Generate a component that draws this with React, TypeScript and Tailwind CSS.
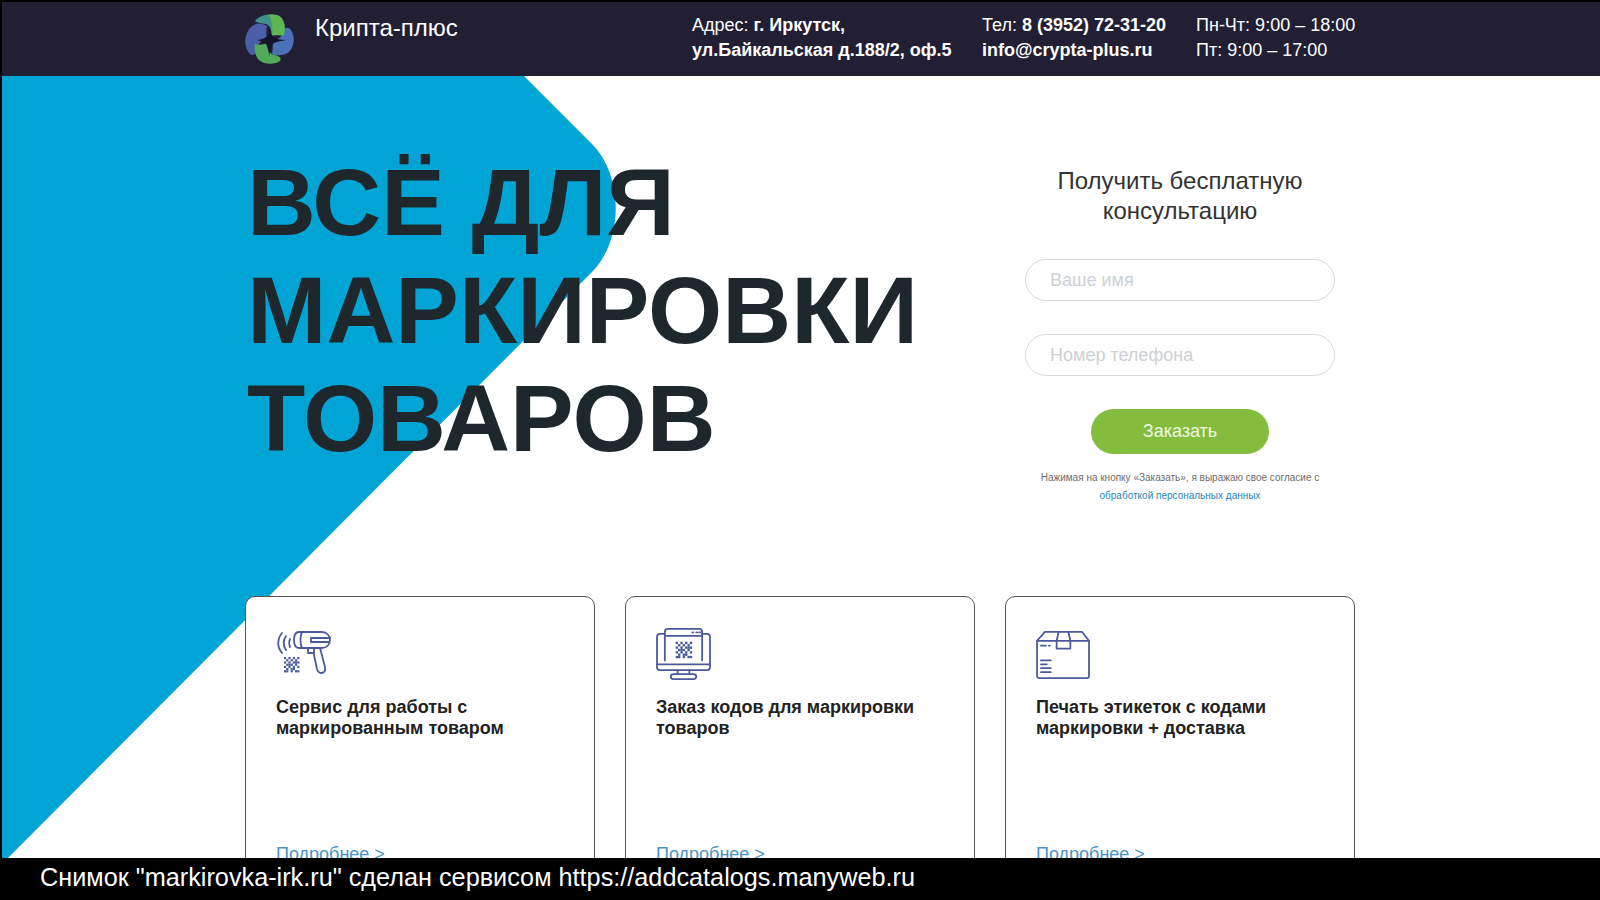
const cards = [
  { title: ['Сервис для работы с', 'маркированным товаром'], icon: 'scanner' },
  { title: ['Заказ кодов для маркировки', 'товаров'], icon: 'monitor' },
  { title: ['Печать этикеток с кодами', 'маркировки + доставка'], icon: 'box' },
] as const;

function Logo() {
  return (
    <svg width="54" height="54" viewBox="0 0 54 54" className="shrink-0">
      {/* left petal */}
      <path d="M9 15C14 10 20 11 25 14C24 18 24 22 25 26C20 27 17 30 16 36C15 41 11 45 8 42C1 35 2 22 9 15Z" fill="#4a5fa6" />
      {/* right petal */}
      <path d="M30 28C36 28 40 25 41 20C42 16 46 14 49 18C53 24 53 34 47 40C42 44 35 44 30 42C31 37 31 33 30 28Z" fill="#4a70b8" />
      {/* top petal */}
      <path d="M13 9C18 2 33 0 39 5C43 9 44 17 42 24C37 23 33 23 29 24C30 18 28 14 24 12C20 11 15 11 13 9Z" fill="#3f8f8a" />
      <path d="M27 3C33 2 38 3 40 7C43 11 43 18 42 23C38 23 34 23 30 23C31 17 30 9 27 3Z" fill="#5fb64f" />
      {/* bottom petal */}
      <path d="M13 32C17 33 21 33 25 31C25 37 27 42 33 43C37 44 40 46 38 49C33 53 21 53 16 47C13 43 12 37 13 32Z" fill="#52a95a" />
      {/* centre star */}
      <path d="M27 14C28 20 27 23 24 25C22 27 18 28 15 28C19 29 22 30 24 32C26 35 27 39 27 44C28 39 29 35 31 32C33 30 38 29 44 28C38 28 34 27 31 25C29 22 28 18 27 14Z" fill="#15132a" />
    </svg>
  );
}

function Qr({ x, y, s }: { x: number; y: number; s: number }) {
  const on = [
    '1010101', '0101010', '1010111', '0111010', '1010101', '0101100', '1101011',
  ];
  return (
    <g fill="#4a5a9a" stroke="none">
      {on.flatMap((row, r) =>
        row.split('').map((c, i) =>
          c === '1' ? <rect key={`${r}-${i}`} x={x + i * s} y={y + r * s} width={s} height={s} /> : null,
        ),
      )}
    </g>
  );
}

function ScannerIcon() {
  return (
    <svg width="56" height="52" viewBox="0 0 56 52" fill="none" stroke="#4a5a9a" strokeWidth="1.8" strokeLinecap="round" strokeLinejoin="round">
      <path d="M6 4C1 10 1 18 6 24" />
      <path d="M10 7C7 11 7 17 10 21" />
      <path d="M14 10C13 12 13 16 14 18" />
      <path d="M23 3H46C51 3 54 7 54 11C54 15 51 19 46 19H23C19 19 18 15 18 11C18 7 19 3 23 3Z" />
      <path d="M26 3C24 7 24 15 26 19" />
      <path d="M35 9H54M35 13H53M35 9V13" />
      <path d="M32 19V24H38" />
      <path d="M38 19L44 19L49 38C50 42 48 44 45 44C43 44 42 43 41 40L38 26V19Z" />
      <Qr x={8} y={28} s={2.2} />
    </svg>
  );
}

function MonitorIcon() {
  return (
    <svg width="55" height="53" viewBox="0 0 56 54" fill="none" stroke="#4a5a9a" strokeWidth="1.8" strokeLinecap="round" strokeLinejoin="round">
      <path d="M9 33V4C9 2 10 1 12 1H44C46 1 47 2 47 4V33" />
      <path d="M9 8H47" />
      <path d="M37 4.5H38M41 4.5H42M44 4.5H45" />
      <path d="M9 6H4C2 6 1 7 1 9V40C1 42 2 43 4 43H52C54 43 55 42 55 40V9C55 7 54 6 52 6H47" />
      <path d="M1 37H55" />
      <path d="M22 43V47M34 43V47" />
      <path d="M18 47H38C40 47 41 48 41 49.5C41 51 40 52 38 52H18C16 52 15 51 15 49.5C15 48 16 47 18 47Z" />
      <Qr x={20} y={14} s={2.4} />
    </svg>
  );
}

function BoxIcon() {
  return (
    <svg width="55" height="49" viewBox="0 0 56 50" fill="none" stroke="#4a5a9a" strokeWidth="1.8" strokeLinecap="round" strokeLinejoin="round">
      <path d="M9 2H47L54 11V47C54 48 53 49 52 49H3C2 49 1 48 1 47V11L9 2Z" />
      <path d="M1 11H54" />
      <path d="M23 2L21 11V19H35V11L33 2" />
      <path d="M5 16H10M13 16H14" />
      <path d="M5 31H15M5 35H11M5 39H15M5 43H15" />
    </svg>
  );
}

function Input({ placeholder }: { placeholder: string }) {
  return (
    <input
      placeholder={placeholder}
      className="h-[42px] w-[310px] rounded-full border border-[#d5d9dd] bg-white px-[24px] text-[18px] text-[#333] outline-none placeholder:text-[#cdd0d4]"
    />
  );
}

export default function App() {
  return (
    <div
      className="relative h-[900px] w-[1600px] overflow-hidden border-l-2 border-t-2 border-black bg-white"
      style={{ fontFamily: '"Liberation Sans", Arial, sans-serif' }}
    >
      {/* Blue background shape */}
      <svg className="absolute left-0 top-0" width="1600" height="900" viewBox="0 0 1600 900">
        <path d="M0 70H518L590 142C622 174 622 240 588 272L6 856H0Z" fill="#00a5d6" />
      </svg>

      <header className="relative z-10 h-[74px] bg-[#221f35] text-white">
        <div className="ml-[243px] flex items-start">
          <div className="ml-[-3px] mt-[10px] flex w-[450px] items-start gap-[19px]">
            <Logo />
            <span className="mt-[1px] text-[24px] leading-[30px]">Крипта-плюс</span>
          </div>
          <div className="mt-[11px] w-[290px] text-[18px] leading-[25px]">
            Адрес: <b>г. Иркутск,</b>
            <br />
            <b>ул.Байкальская д.188/2, оф.5</b>
          </div>
          <div className="mt-[11px] w-[214px] text-[18px] leading-[25px]">
            Тел: <b>8 (3952) 72-31-20</b>
            <br />
            <b>info@crypta-plus.ru</b>
          </div>
          <div className="mt-[11px] text-[18px] leading-[25px]">
            Пн-Чт: 9:00 – 18:00
            <br />
            Пт: 9:00 – 17:00
          </div>
        </div>
      </header>

      <main className="relative z-10 ml-[243px] w-[1110px]">
        <div className="flex h-[520px] justify-between pr-[20px]">
          <h1 className="ml-[2px] mt-[72px] text-[95.4px] font-bold leading-[108px] text-[#1e272c]">
            ВСЁ ДЛЯ
            <br />
            МАРКИРОВКИ
            <br />
            ТОВАРОВ
          </h1>
          <form className="mt-[90px] flex w-[310px] flex-col items-center">
            <h2 className="text-center text-[24px] leading-[30px] text-[#333]">
              Получить бесплатную
              <br />
              консультацию
            </h2>
            <div className="mt-[33px] flex flex-col gap-[33px]">
              <Input placeholder="Ваше имя" />
              <Input placeholder="Номер телефона" />
            </div>
            <button type="button" className="mt-[33px] h-[45px] w-[178px] rounded-full bg-[#84bd3e] text-[18px] text-[#eef6e2]">
              Заказать
            </button>
            <p className="mt-[15px] whitespace-nowrap text-center text-[10px] leading-[18px] text-[#6d6d6d]">
              Нажимая на кнопку «Заказать», я выражаю свое согласие с
              <br />
              <a className="text-[#1f86b8]">обработкой персональных данных</a>
            </p>
          </form>
        </div>

        <div className="grid grid-cols-3 gap-[30px]">
          {cards.map((card) => (
            <div key={card.icon} className="h-[300px] rounded-[10px] border border-[#555] bg-white px-[30px] pt-[30px]">
              <div className="flex h-[55px] items-center">
                {card.icon === 'scanner' && <ScannerIcon />}
                {card.icon === 'monitor' && <MonitorIcon />}
                {card.icon === 'box' && <BoxIcon />}
              </div>
              <h3 className="mt-[15px] text-[18px] font-bold leading-[21px] text-[#222]">
                {card.title[0]}
                <br />
                {card.title[1]}
              </h3>
              <a className="mt-[102px] block text-[18px] text-[#4a94c4]">Подробнее &gt;</a>
            </div>
          ))}
        </div>
      </main>

      {/* Screenshot service caption */}
      <div className="absolute bottom-0 left-[-2px] right-0 z-20 flex h-[42px] items-center bg-black pb-[2px] pl-[40px] text-[25.25px] text-white">
        Снимок "markirovka-irk.ru" сделан сервисом https://addcatalogs.manyweb.ru
      </div>
    </div>
  );
}
